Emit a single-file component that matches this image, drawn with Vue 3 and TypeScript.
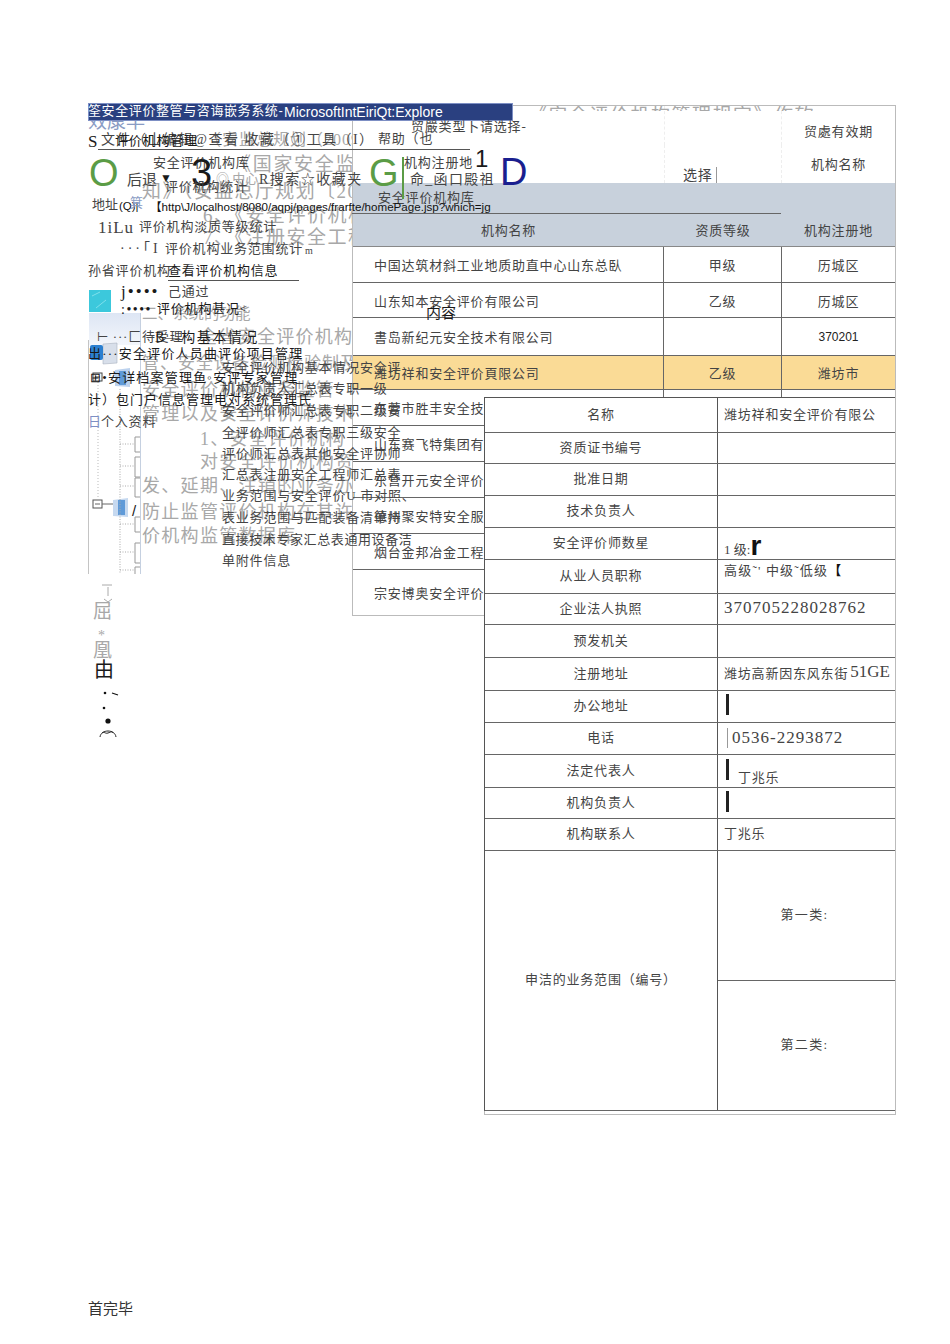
<script setup lang="ts">
interface Frag { t: string; x: number; y: number; s: number; c?: string; f?: string; ls?: number }

const G1 = '#a8a8a8'
const K = '#1a1a1a'
const M = '#444'
const SANS = '"Liberation Sans","Noto Sans CJK SC",sans-serif'

// Fragments of the broken page: their free position is the content itself.
const bodyText: Frag[] = [
  { t: '效康早', x: 88, y: 111, s: 19, c: '#8a9cc4' },
  { t: '（安监总规划（2009）', x: 205, y: 131, s: 16, c: G1, ls: 1 },
  { t: '《国家安全监管', x: 232, y: 154, s: 19, c: G1, ls: 1.7 },
  { t: '知》（安监总厅规划〔20', x: 142, y: 181, s: 19, c: G1, ls: 1.4 },
  { t: '6、《安全评价机构', x: 203, y: 205, s: 19, c: G1, ls: 1.5 },
  { t: '7、《注册安全工程', x: 203, y: 227, s: 19, c: G1, ls: 1.5 },
  { t: '二、系统的功能', x: 142, y: 305, s: 15.5, c: G1 },
  { t: '全省安全评价机构', x: 199, y: 327, s: 18, c: G1, ls: 1.3 },
  { t: '管、安全设备检测检验制及', x: 142, y: 354, s: 17, c: G1, ls: 1 },
  { t: '安全评价机构业务监管', x: 142, y: 380, s: 18, c: G1, ls: 1.3 },
  { t: '管理以及安全评价师技术咨', x: 142, y: 404, s: 18, c: G1, ls: 1.3 },
  { t: '1、安全评价机构', x: 200, y: 429, s: 18, c: G1, ls: 1.3 },
  { t: '对安全评价机构资', x: 200, y: 452, s: 18, c: G1, ls: 1.3 },
  { t: '发、延期、注销的业务办', x: 142, y: 476, s: 18, c: G1, ls: 1.3 },
  { t: '防止监管评价机构在其许', x: 142, y: 502, s: 18, c: G1, ls: 1.3 },
  { t: '价机构监管数据库', x: 142, y: 526, s: 18, c: G1, ls: 1.3 }
]

const menuText: Frag[] = [
  { t: '筌安全评价整管与咨诲嵌务系统-', x: 88, y: 104, s: 13, c: '#fff', f: SANS, ls: 0.6 },
  { t: 'MicrosoftIntEiriQt:Explore', x: 284, y: 104, s: 14, c: '#fff', f: SANS },
  { t: 'S', x: 88, y: 132, s: 17, c: K },
  { t: '文件（山编辑@查看 收藏（①工具（I）', x: 101, y: 132, s: 14, c: M, ls: 1.5 },
  { t: '评价机构管理', x: 115, y: 134, s: 13, c: K, ls: 0.8 },
  { t: '帮助（也', x: 378, y: 132, s: 13, c: M, ls: 0.8 },
  { t: '贸嚴类型卜请选择-', x: 411, y: 120, s: 13, c: M, ls: 0.8 },
  { t: 'O', x: 89, y: 152, s: 38, c: '#5b9c46', f: SANS },
  { t: '安全评价机构库', x: 153, y: 156, s: 13, c: M, ls: 0.8 },
  { t: '后退', x: 127, y: 172, s: 15, c: M },
  { t: '▼', x: 160, y: 172, s: 12, c: K, f: SANS },
  { t: '3', x: 191, y: 152, s: 38, c: K, f: SANS },
  { t: '评价机构统计', x: 165, y: 180, s: 13, c: M, ls: 0.8 },
  { t: '◎ 中心', x: 216, y: 172, s: 13, c: G1 },
  { t: 'R搜索☆收藏夹', x: 259, y: 172, s: 14, c: M, ls: 1.5 },
  { t: 'G', x: 369, y: 152, s: 38, c: '#5b9c46', f: SANS },
  { t: '机构注册地', x: 404, y: 156, s: 13, c: M, ls: 0.8 },
  { t: '1', x: 475, y: 145, s: 24, c: K, f: SANS },
  { t: '命_函口殿祖', x: 410, y: 172, s: 14, c: M, ls: 1.3 },
  { t: 'D', x: 500, y: 151, s: 38, c: '#1a1f8f', f: SANS },
  { t: '安全评价机构库', x: 378, y: 191, s: 13, c: M, ls: 0.8 },
  { t: '地址', x: 92, y: 198, s: 13, c: M },
  { t: '(Q)|', x: 119, y: 200, s: 11.5, c: '#111', f: SANS },
  { t: '【http\\J/localhost/8080/aqpj/pages/frarfte/homePage.jsp?which=jg', x: 150, y: 200, s: 11.6, c: '#111', f: SANS },
  { t: '1iLu', x: 98, y: 218, s: 17, c: M, ls: 1 },
  { t: '评价机构淡质等级统计', x: 139, y: 220, s: 13, c: M, ls: 0.8 },
  { t: '···「I', x: 120, y: 241, s: 14, c: M, ls: 3 },
  { t: '评价机构业务范围统计', x: 165, y: 242, s: 13, c: M, ls: 0.8 },
  { t: 'm', x: 305, y: 245, s: 10, c: M },
  { t: '孙省评价机构', x: 88, y: 264, s: 13, c: M, ls: 0.8 },
  { t: '查看评价机构信息', x: 168, y: 264, s: 13, c: K, ls: 0.8 },
  { t: 'j••••', x: 121, y: 282, s: 17, c: K, ls: 2 },
  { t: '己通过', x: 168, y: 285, s: 13, c: M, ls: 0.8 },
  { t: ':••••', x: 121, y: 302, s: 14, c: K, ls: 1.5 },
  { t: '评价机构甚况<', x: 157, y: 302, s: 13, c: K, ls: 0.8 },
  { t: '内容', x: 426, y: 305, s: 15, c: K },
  { t: '⊢ ···匚待受理', x: 97, y: 330, s: 13, c: M, ls: 0.8 },
  { t: 'B—构基本情况', x: 155, y: 330, s: 14, c: K, ls: 1.5 },
  { t: '出···安全评价人员曲评价项目管理', x: 88, y: 347, s: 13, c: K, ls: 1.2 },
  { t: '安全评价机构基本情况安全评', x: 222, y: 361, s: 13, c: M, ls: 0.8 },
  { t: '⊞•安详档案管理鱼◦安评专家管理', x: 90, y: 371, s: 13, c: K, ls: 1.2 },
  { t: '机构负责人汇总表专职一级', x: 222, y: 382, s: 13, c: M, ls: 0.8 },
  { t: '计）包门户信息管理电対系统管理氏', x: 88, y: 393, s: 13, c: K, ls: 1 },
  { t: '安全评价师汇总表专职二级安', x: 222, y: 404, s: 13, c: M, ls: 0.8 },
  { t: '日', x: 88, y: 415, s: 13, c: '#7d8fc4' },
  { t: '个入资料', x: 101, y: 415, s: 13, c: M, ls: 0.8 },
  { t: '全评价师汇总表专职三级安全', x: 222, y: 426, s: 13, c: M, ls: 0.8 },
  { t: '评价师汇总表其他安全评协师', x: 222, y: 447, s: 13, c: M, ls: 0.8 },
  { t: '汇总表注册安全工程师汇总表', x: 222, y: 468, s: 13, c: M, ls: 0.8 },
  { t: '业务范围与安全评价U 市对照、', x: 222, y: 489, s: 13, c: M, ls: 0.8 },
  { t: '表业务范围与匹配装备清单持', x: 222, y: 511, s: 13, c: M, ls: 0.8 },
  { t: '直接技术专家汇总表通用设备洁', x: 222, y: 533, s: 13, c: M, ls: 0.6 },
  { t: '单附件信息', x: 222, y: 554, s: 13, c: M, ls: 0.8 },
  { t: '箕', x: 130, y: 196, s: 13, c: '#8a9cc4' },
  { t: '/', x: 132, y: 502, s: 15, c: K, f: SANS }
]

const tailGlyphs: Frag[] = [
  { t: '屈', x: 93, y: 601, s: 19, c: G1 },
  { t: '*', x: 98, y: 628, s: 14, c: G1 },
  { t: '凰', x: 93, y: 640, s: 19, c: G1 },
  { t: '由', x: 94, y: 659, s: 20, c: K }
]

interface Hit { name: string; level: string; place: string; hi?: boolean; placeSans?: boolean }
const hits: Hit[] = [
  { name: '中国达筑材斜工业地质助直中心山东总臥', level: '甲级', place: '历城区' },
  { name: '山东知本安全评价有限公司', level: '乙级', place: '历城区' },
  { name: '書岛新纪元安全技术有限公司', level: '', place: '370201', placeSans: true },
  { name: '潍坊祥和安全评价頁限公司', level: '乙级', place: '潍坊市', hi: true },
  { name: '东营市胜丰安全技', level: '', place: '' },
  { name: '山东赛飞特集团有', level: '', place: '' },
  { name: '东营开元安全评价', level: '', place: '' },
  { name: '德州聚安特安全服', level: '', place: '' },
  { name: '烟台金邦冶金工程', level: '', place: '' },
  { name: '宗安博奥安全评价', level: '', place: '' }
]
const hitHeights = [36, 35, 38, 34, 36, 36, 36, 36, 36, 45]

interface Detail { k: string; v?: string; h: number; big?: boolean; bar?: boolean; tick?: boolean; suffix?: string }
const details: Detail[] = [
  { k: '名称', v: '潍坊祥和安全评价有限公', h: 35 },
  { k: '资质证书编号', h: 31 },
  { k: '批准日期', h: 32 },
  { k: '技术负责人', h: 32 },
  { k: '安全评价师数星', h: 32 },
  { k: '从业人员职称', h: 34 },
  { k: '企业法人执照', v: '370705228028762', h: 31, big: true },
  { k: '预发机关', h: 33 },
  { k: '注册地址', v: '潍坊高新因东风东街', suffix: '51GE', h: 33 },
  { k: '办公地址', h: 32, bar: true },
  { k: '电话', v: '0536-2293872', h: 32, big: true, tick: true },
  { k: '法定代表人', v: '丁兆乐', h: 33, bar: true },
  { k: '机构负责人', h: 31, bar: true },
  { k: '机构联系人', v: '丁兆乐', h: 32 }
]

function place(f: Frag) {
  return {
    left: f.x + 'px',
    top: f.y + 'px',
    fontSize: f.s + 'px',
    color: f.c,
    fontFamily: f.f,
    letterSpacing: f.ls ? f.ls + 'px' : undefined
  }
}
</script>

<template>
  <div class="page">
    <div v-for="(f, i) in bodyText" :key="'b' + i" class="frag" :style="place(f)">{{ f.t }}</div>

    <section class="hits">
      <div class="snip">《安全评价机构管理规定》作软件</div>
      <div class="filter-zone">
        <div class="filter-row top"><span class="sel"></span><span class="lab">贸處有效期</span></div>
        <div class="filter-row bottom"><span class="sel"><i>选择</i></span><span class="lab">机构名称</span></div>
      </div>
      <div class="band"></div>
      <div class="hit-head">
        <span>机构名称</span><span>资质等级</span><span>机构注册地</span>
      </div>
      <div
        v-for="(r, i) in hits"
        :key="i"
        class="hit-row"
        :class="{ hi: r.hi }"
        :style="{ height: hitHeights[i] + 'px' }"
      >
        <span class="hit-name">{{ r.name }}</span>
        <span class="hit-cell">{{ r.level }}</span>
        <span class="hit-cell" :class="{ sans: r.placeSans }">{{ r.place }}</span>
      </div>
    </section>

    <section class="detail">
      <div class="detail-inner">
        <div v-for="(d, i) in details" :key="i" class="d-row" :style="{ height: d.h + 'px' }">
          <div class="d-k">{{ d.k }}</div>
          <div class="d-v" :class="{ big: d.big }">
            <template v-if="d.k === '安全评价师数星'">
              <span class="lvl">1 级:</span><b class="lvl-r">r</b>
            </template>
            <template v-else-if="d.k === '从业人员职称'">
              <span class="titles">高级˜' 中级˜低级<b>【</b></span>
            </template>
            <template v-else>
              <i v-if="d.bar" class="bar"></i>
              <i v-if="d.tick" class="tick"></i>
              <span :class="{ after: d.bar }">{{ d.v }}</span>
              <span v-if="d.suffix" class="suffix">{{ d.suffix }}</span>
            </template>
          </div>
        </div>
        <div class="d-scope">
          <div class="d-k">申洁的业务范围（编号）</div>
          <div class="d-cats">
            <div>第一类:</div>
            <div>第二类:</div>
          </div>
        </div>
      </div>
    </section>

    <div class="titlebar"></div>
    <div class="tree">
      <svg class="tree-art" width="53" height="290" viewBox="0 0 53 290" fill="none">
        <defs>
          <linearGradient id="panelFade" x1="0" y1="0" x2="0" y2="1">
            <stop offset="0" stop-color="#dde6f4" />
            <stop offset="1" stop-color="#f3f6fb" />
          </linearGradient>
        </defs>
        <rect x="1" y="6" width="22" height="22" fill="#3cc8dc" />
        <path d="M4 12l8-4M8 24l10-8" stroke="#7fe0ec" />
        <rect x="1" y="29" width="51" height="32" fill="url(#panelFade)" />
        <path d="M52.5 29V290" stroke="#c5d0e0" />
        <path d="M.5 56V290" stroke="#c4c4c4" />
        <path d="M15 60l14-1v20l-14 1z" fill="#d8dfea" stroke="#a9b2c0" stroke-width=".6" />
        <rect x="2" y="61" width="13" height="15" rx="2" fill="#2b7fd0" />
        <rect x="5" y="89" width="9" height="8" fill="#fff" stroke="#444" />
        <path d="M7 93h5" stroke="#444" />
        <path d="M27 86l15-2v19l-15-1z" fill="#bcd2ee" />
        <rect x="31" y="87" width="7" height="14" fill="#5f9ad8" />
        <rect x="5" y="216" width="9" height="8" fill="#fff" stroke="#555" />
        <path d="M7 220h5M14 220h11" stroke="#666" />
        <path d="M25 216l15-2v19l-15-1z" fill="#c6d9f0" />
        <rect x="30" y="216" width="7" height="15" fill="#5f9ad8" />
        <path d="M10 98V215" stroke="#bbb" stroke-dasharray="1 2" />
        <path d="M32 105V290M32 160h15M32 182h15M32 202h15M32 240h15M32 268h15M32 286h15" stroke="#aaa" stroke-dasharray="1 1.5" />
        <path d="M52 153h-5v15h5M52 173h-5v20h5M52 194h-5v19h5M52 233h-5v15h5M52 259h-5v20h5M52 283h-5v7" stroke="#999" />
      </svg>
    </div>

    <div v-for="(f, i) in menuText" :key="'m' + i" class="frag" :style="place(f)">{{ f.t }}</div>
    <i class="rule r2"></i>
    <i class="rule r3"></i>
    <i class="rule r4"></i>
    <i class="stroke"></i>

    <div v-for="(f, i) in tailGlyphs" :key="'t' + i" class="frag" :style="place(f)">{{ f.t }}</div>
    <svg class="tail" width="30" height="160" viewBox="0 0 30 160" fill="none">
      <path d="M12 5h10M18 7v9M14 19l4 3 4-3" stroke="#aaa" />
      <circle cx="15" cy="113" r="1.3" fill="#111" />
      <path d="M22 113l6 2" stroke="#111" stroke-width="1.2" />
      <circle cx="14" cy="128" r="1.3" fill="#111" />
      <circle cx="18" cy="141" r="2.6" fill="#111" />
      <path d="M10 157c1-8 15-8 16 0M12 153c2-2 3 1 6 0s4-2 5 0" stroke="#222" />
    </svg>
    <div class="foot">首完毕</div>
  </div>
</template>

<style>
html, body { margin: 0; background: #fff; }
</style>

<style scoped>
.page {
  position: relative;
  width: 950px;
  height: 1344px;
  overflow: hidden;
  background: #fff;
  font-family: "Liberation Serif", "Noto Sans CJK SC", serif;
  color: #444;
}
.frag { position: absolute; white-space: nowrap; line-height: 1.15; }
.titlebar {
  position: absolute; left: 88px; top: 103px; width: 425px; height: 18px;
  background: #2a4080; border: 1px solid #7d8fc4; box-sizing: border-box;
}
.hits {
  position: absolute; left: 352px; top: 105px; width: 544px;
  box-sizing: border-box; border: 1px solid #bbb;
  display: flex; flex-direction: column; font-size: 13px; letter-spacing: .8px; background: #fff;
}
.snip {
  position: absolute; left: 175px; top: 0; width: 285px; height: 5px; overflow: hidden;
  font-size: 19px; line-height: 19px; letter-spacing: 1.5px; color: #a8a8a8; white-space: nowrap;
}
.filter-zone { height: 77px; display: flex; flex-direction: column; }
.filter-row { display: grid; grid-template-columns: 311px 118px 1fr; flex: 1; }
.filter-row .sel { grid-column: 2; display: flex; align-items: flex-end; border-left: 1px dashed #eee; border-right: 1px dashed #eee; }
.filter-row .lab { grid-column: 3; text-align: center; }
.filter-row.top .lab { padding-top: 15px; }
.filter-row.bottom .lab { padding-top: 9px; }
.filter-row.bottom .sel i {
  font-style: normal; font-size: 14px; line-height: 18px; margin-left: 18px; margin-bottom: -2px;
  padding-right: 3px; border-right: 1px solid #999;
}
.band { height: 30px; background: #c8d1dc; }
.hit-head {
  height: 34px; display: grid; grid-template-columns: 311px 118px 1fr;
  background: #c8d1dc; align-items: center; text-align: center;
  border-bottom: 1px solid #888; box-sizing: border-box;
}
.hit-row {
  display: grid; grid-template-columns: 311px 118px 1fr; box-sizing: border-box;
  border-bottom: 1px solid #666;
}
.hit-row:last-child { border-bottom: 0; }
.hit-row > span { display: flex; align-items: center; }
.hit-name { padding-left: 21px; border-right: 1px solid #666; white-space: nowrap; overflow: hidden; }
.hit-cell { justify-content: center; border-right: 1px solid #666; }
.hit-cell:last-child { border-right: 0; }
.sans { font-family: "Liberation Sans", sans-serif; font-size: 12px; color: #222; letter-spacing: 0; }
.hi { background: #fadb96; }
.detail {
  position: absolute; left: 484px; top: 397px; width: 412px; box-sizing: border-box;
  border-right: 1px solid #bbb; border-bottom: 1px solid #bbb; border-left: 1px solid #bbb;
  padding-bottom: 3px; background: #fff; font-size: 13px; letter-spacing: .8px;
}
.detail-inner {
  margin-left: -1px; display: flex; flex-direction: column;
  border-top: 1px solid #555; border-left: 1px solid #555; border-bottom: 1px solid #666;
}
.d-row { display: grid; grid-template-columns: 233px 1fr; box-sizing: border-box; border-bottom: 1px solid #666; }
.d-k { display: flex; align-items: center; justify-content: center; border-right: 1px solid #555; padding-bottom: 4px; }
.d-v { display: flex; align-items: center; padding-left: 6px; padding-bottom: 4px; position: relative; white-space: nowrap; }
.d-v.big { font-size: 17px; letter-spacing: 1px; padding-bottom: 2px; }
.d-v.big .tick + span { margin-left: 4px; }
.suffix { font-size: 17px; margin-left: 2px; letter-spacing: 0; }
.lvl { font-size: 13px; letter-spacing: 0; align-self: flex-end; margin-bottom: -3px; }
.lvl-r { font: 700 28px/26px "Liberation Sans", sans-serif; color: #111; align-self: flex-end; margin-bottom: -4px; }
.titles { font-size: 13px; letter-spacing: 1.2px; align-self: flex-start; margin-top: 0; }
.titles b { color: #111; }
.bar { display: block; width: 3px; height: 21px; background: #222; margin: 0 9px 0 2px; }
.tick { display: block; width: 1px; height: 20px; background: #999; margin-left: 3px; }
.after { font-size: 13px; align-self: flex-end; margin-bottom: -3px; }
.d-scope { display: grid; grid-template-columns: 233px 1fr; height: 259px; }
.d-cats { display: grid; grid-template-rows: 1fr 1fr; letter-spacing: 1.4px; }
.d-cats div { display: flex; align-items: center; justify-content: center; padding-bottom: 3px; padding-right: 4px; }
.d-cats div:first-child { border-bottom: 1px solid #666; }
.tree { position: absolute; left: 88px; top: 284px; width: 53px; height: 290px; }
.tree-art { display: block; }
.rule { position: absolute; display: block; height: 1px; background: #666; }
.r2 { left: 98px; top: 149px; width: 372px; background: #555; }
.r3 { left: 168px; top: 280px; width: 131px; background: #555; }
.r4 { left: 352px; top: 213px; width: 429px; background: #666; }
.stroke { position: absolute; left: 402px; top: 157px; width: 2px; height: 42px; background: #5b9c46; }
.tail { position: absolute; left: 90px; top: 580px; }
.foot { position: absolute; left: 88px; top: 1297px; font-size: 15px; color: #333; }
</style>
